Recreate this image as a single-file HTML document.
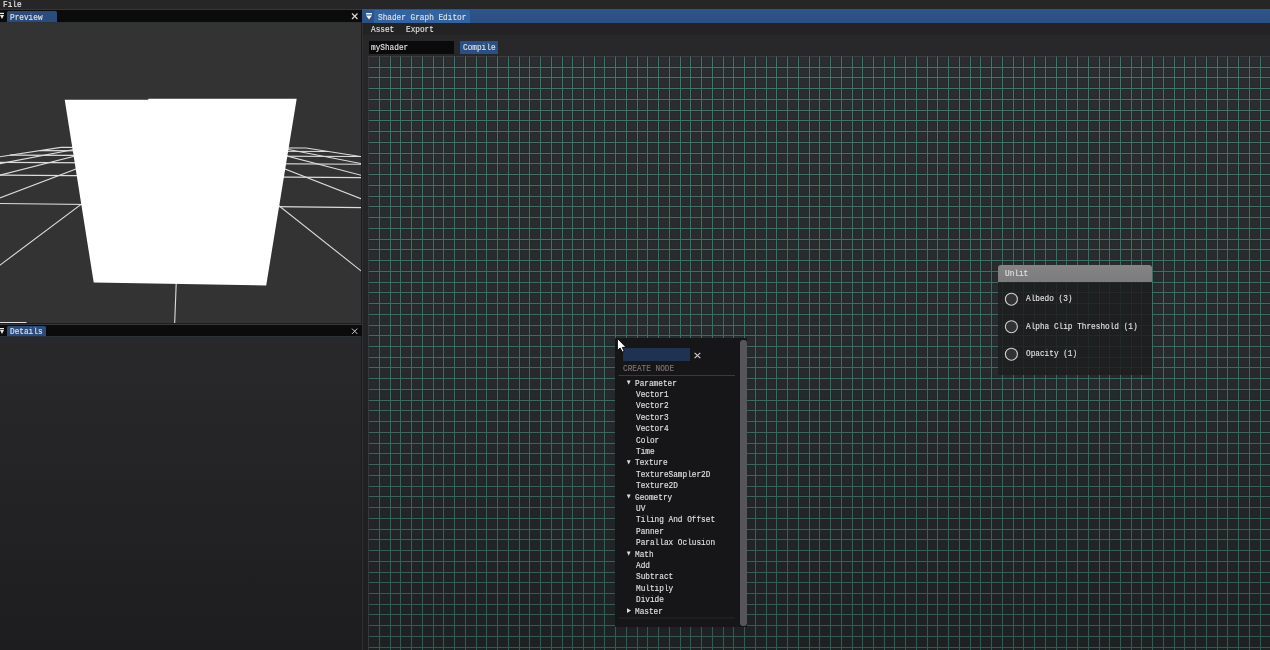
<!DOCTYPE html>
<html><head><meta charset="utf-8">
<style>
*{margin:0;padding:0;box-sizing:border-box}
html,body{width:1270px;height:650px;overflow:hidden;background:#1d1d1f}
body{position:relative;font-family:"Liberation Mono",monospace;font-size:7.75px;letter-spacing:0;color:#e2e2e2;line-height:9px}
.a{position:absolute}
.t{position:absolute;white-space:pre;transform:translateY(-0.3px) scaleY(1.1);transform-origin:0 0;will-change:transform;-webkit-text-stroke:0.12px currentColor}
svg{position:absolute;left:0;top:0}
</style></head><body>
<!-- main menu bar -->
<div class="a" style="left:0;top:0;width:1270px;height:9.5px;background:#262626"></div>
<div class="t" style="left:3px;top:0.5px;color:#eee">File</div>

<!-- Preview window -->
<div class="a" style="left:0;top:8.8px;width:362px;height:1.2px;background:#36363a"></div>
<div class="a" style="left:0;top:10px;width:362px;height:11.8px;background:#0b0b0b"></div>
<div class="a" style="left:7px;top:10.5px;width:49.5px;height:11.5px;background:#2a4c7c;border-radius:1.5px 1.5px 0 0"></div>
<div class="t" style="left:10px;top:13.8px">Preview</div>
<svg width="1270" height="650">
 <g fill="#e8e8e8"><rect x="0" y="12.8" width="4" height="1.3"/><polygon points="0,15 4,15 2,19"/></g>
 <g stroke="#d4d4d4" stroke-width="1.3"><line x1="352" y1="13.5" x2="357.5" y2="19"/><line x1="357.5" y1="13.5" x2="352" y2="19"/></g>
</svg>
<div class="a" style="left:0;top:21.8px;width:361.2px;height:301.5px;background:#333333;border-top:1.4px solid #2d3235"></div>
<svg width="1270" height="650">
 <defs><clipPath id="pv"><rect x="0" y="22" width="361.2" height="301.5"/></clipPath></defs>
 <g clip-path="url(#pv)"><g stroke="#dcdcdc" stroke-width="1.1" fill="none"><line x1="0.00" y1="322.60" x2="26.50" y2="322.60"/><line x1="-284.98" y1="200.36" x2="715.60" y2="211.52"/><line x1="-115.20" y1="174.34" x2="503.37" y2="178.62"/><line x1="-35.96" y1="162.20" x2="411.92" y2="164.44"/><line x1="9.92" y1="155.17" x2="360.99" y2="156.55"/><line x1="39.85" y1="150.58" x2="328.53" y2="151.52"/><line x1="60.91" y1="147.36" x2="306.04" y2="148.03"/><line x1="60.91" y1="147.36" x2="-3545.51" y2="700.00"/><line x1="84.64" y1="147.42" x2="-2804.30" y2="700.00"/><line x1="108.55" y1="147.49" x2="-2063.09" y2="700.00"/><line x1="132.63" y1="147.55" x2="-1321.89" y2="700.00"/><line x1="156.87" y1="147.62" x2="-580.68" y2="700.00"/><line x1="181.29" y1="147.69" x2="160.53" y2="700.00"/><line x1="205.88" y1="147.75" x2="901.74" y2="700.00"/><line x1="230.65" y1="147.82" x2="1642.94" y2="700.00"/><line x1="255.60" y1="147.89" x2="2384.15" y2="700.00"/><line x1="280.73" y1="147.96" x2="3125.36" y2="700.00"/><line x1="306.04" y1="148.03" x2="3866.56" y2="700.00"/></g></g>
 <polygon clip-path="url(#pv)" points="64.7,99.7 148.3,99.7 148.3,98.7 296.7,98.7 266.2,285.4 93.7,282.6" fill="#ffffff"/>
</svg>
<div class="a" style="left:361.2px;top:22px;width:1px;height:628px;background:#1c1c1c"></div>
<div class="a" style="left:362.2px;top:22px;width:1.2px;height:628px;background:#303032"></div>

<!-- Details window -->
<div class="a" style="left:0;top:323.3px;width:362px;height:0.8px;background:#1e1e1e"></div>
<div class="a" style="left:0;top:324.1px;width:362px;height:1px;background:#38383c"></div>
<div class="a" style="left:0;top:325.1px;width:362px;height:11.1px;background:#0b0b0b"></div>
<div class="a" style="left:7px;top:326px;width:38.7px;height:11px;background:#2a4c7c;border-radius:1.5px 1.5px 0 0"></div>
<div class="t" style="left:9.8px;top:328.3px">Details</div>
<svg width="1270" height="650">
 <g fill="#e8e8e8"><rect x="0" y="328" width="4" height="1.3"/><polygon points="0,330 4,330 2,334"/></g>
 <g stroke="#cccccc" stroke-width="1"><line x1="352" y1="328.6" x2="357.3" y2="333.9"/><line x1="357.3" y1="328.6" x2="352" y2="333.9"/></g>
</svg>
<div class="a" style="left:0;top:336.2px;width:361.2px;height:313.8px;background:linear-gradient(#29292c,#1d1d1f);border-top:1.4px solid #2a3438"></div>

<!-- Shader graph editor window -->
<div class="a" style="left:362.2px;top:9px;width:907.8px;height:13.7px;background:linear-gradient(#2e5589,#2a4f84)"></div>
<div class="a" style="left:374px;top:10px;width:95.5px;height:12.7px;background:#3264a4;border-radius:1.5px 1.5px 0 0"></div>
<div class="t" style="left:377.5px;top:13.5px">Shader Graph Editor</div>
<svg width="1270" height="650">
 <g fill="#f0f0f0"><rect x="366" y="13" width="6" height="1.5"/><polygon points="366,15.5 372,15.5 369,19.5"/></g>
</svg>
<div class="a" style="left:363.4px;top:22.7px;width:906.6px;height:627.3px;background:linear-gradient(#28282b,#1e1e20)"></div>
<div class="a" style="left:363.4px;top:22.7px;width:906.6px;height:12px;background:#232323"></div>
<div class="t" style="left:371.3px;top:26px">Asset</div>
<div class="t" style="left:405.8px;top:26px">Export</div>
<div class="a" style="left:368.5px;top:41px;width:85.5px;height:12.7px;background:#0a0a0a"></div>
<div class="t" style="left:371px;top:44px">myShader</div>
<div class="a" style="left:460px;top:41px;width:38px;height:12.7px;background:#2a4f84"></div>
<div class="t" style="left:463px;top:44px">Compile</div>

<!-- canvas -->
<div class="a" style="left:368.3px;top:56px;width:901.7px;height:594px;background:linear-gradient(#2c2d31 0%,#292a2e 50%,#1f2022 100%);border-top:1px solid #3e3e40;border-left:1px solid #38383a"></div>
<svg width="1270" height="650"><defs><linearGradient id="gl" gradientUnits="userSpaceOnUse" x1="0" y1="56" x2="0" y2="650"><stop offset="0" stop-color="#43736a"/><stop offset="0.5" stop-color="#3e6c64"/><stop offset="1" stop-color="#335a50"/></linearGradient></defs>
<path stroke="#0c2a22" stroke-opacity="0.3" stroke-width="3" d="M379.5 56.5V650M390.5 56.5V650M400.5 56.5V650M411.5 56.5V650M422.5 56.5V650M433.5 56.5V650M443.5 56.5V650M454.5 56.5V650M465.5 56.5V650M476.5 56.5V650M486.5 56.5V650M497.5 56.5V650M508.5 56.5V650M519.5 56.5V650M529.5 56.5V650M540.5 56.5V650M551.5 56.5V650M562.5 56.5V650M572.5 56.5V650M583.5 56.5V650M594.5 56.5V650M604.5 56.5V650M615.5 56.5V650M626.5 56.5V650M637.5 56.5V650M647.5 56.5V650M658.5 56.5V650M669.5 56.5V650M680.5 56.5V650M690.5 56.5V650M701.5 56.5V650M712.5 56.5V650M723.5 56.5V650M733.5 56.5V650M744.5 56.5V650M755.5 56.5V650M766.5 56.5V650M776.5 56.5V650M787.5 56.5V650M798.5 56.5V650M809.5 56.5V650M819.5 56.5V650M830.5 56.5V650M841.5 56.5V650M852.5 56.5V650M862.5 56.5V650M873.5 56.5V650M884.5 56.5V650M894.5 56.5V650M905.5 56.5V650M916.5 56.5V650M927.5 56.5V650M937.5 56.5V650M948.5 56.5V650M959.5 56.5V650M970.5 56.5V650M980.5 56.5V650M991.5 56.5V650M1002.5 56.5V650M1013.5 56.5V650M1023.5 56.5V650M1034.5 56.5V650M1045.5 56.5V650M1056.5 56.5V650M1066.5 56.5V650M1077.5 56.5V650M1088.5 56.5V650M1099.5 56.5V650M1109.5 56.5V650M1120.5 56.5V650M1131.5 56.5V650M1141.5 56.5V650M1152.5 56.5V650M1163.5 56.5V650M1174.5 56.5V650M1184.5 56.5V650M1195.5 56.5V650M1206.5 56.5V650M1217.5 56.5V650M1227.5 56.5V650M1238.5 56.5V650M1249.5 56.5V650M1260.5 56.5V650M368.7 67.5H1270M368.7 77.5H1270M368.7 88.5H1270M368.7 99.5H1270M368.7 110.5H1270M368.7 120.5H1270M368.7 131.5H1270M368.7 142.5H1270M368.7 153.5H1270M368.7 163.5H1270M368.7 174.5H1270M368.7 185.5H1270M368.7 196.5H1270M368.7 206.5H1270M368.7 217.5H1270M368.7 228.5H1270M368.7 239.5H1270M368.7 249.5H1270M368.7 260.5H1270M368.7 271.5H1270M368.7 282.5H1270M368.7 292.5H1270M368.7 303.5H1270M368.7 314.5H1270M368.7 325.5H1270M368.7 335.5H1270M368.7 346.5H1270M368.7 357.5H1270M368.7 367.5H1270M368.7 378.5H1270M368.7 389.5H1270M368.7 400.5H1270M368.7 410.5H1270M368.7 421.5H1270M368.7 432.5H1270M368.7 443.5H1270M368.7 453.5H1270M368.7 464.5H1270M368.7 475.5H1270M368.7 486.5H1270M368.7 496.5H1270M368.7 507.5H1270M368.7 518.5H1270M368.7 529.5H1270M368.7 539.5H1270M368.7 550.5H1270M368.7 561.5H1270M368.7 572.5H1270M368.7 582.5H1270M368.7 593.5H1270M368.7 604.5H1270M368.7 614.5H1270M368.7 625.5H1270M368.7 636.5H1270M368.7 647.5H1270"/><path stroke="url(#gl)" stroke-width="1" d="M379.5 56.5V650M390.5 56.5V650M400.5 56.5V650M411.5 56.5V650M422.5 56.5V650M433.5 56.5V650M443.5 56.5V650M454.5 56.5V650M465.5 56.5V650M476.5 56.5V650M486.5 56.5V650M497.5 56.5V650M508.5 56.5V650M519.5 56.5V650M529.5 56.5V650M540.5 56.5V650M551.5 56.5V650M562.5 56.5V650M572.5 56.5V650M583.5 56.5V650M594.5 56.5V650M604.5 56.5V650M615.5 56.5V650M626.5 56.5V650M637.5 56.5V650M647.5 56.5V650M658.5 56.5V650M669.5 56.5V650M680.5 56.5V650M690.5 56.5V650M701.5 56.5V650M712.5 56.5V650M723.5 56.5V650M733.5 56.5V650M744.5 56.5V650M755.5 56.5V650M766.5 56.5V650M776.5 56.5V650M787.5 56.5V650M798.5 56.5V650M809.5 56.5V650M819.5 56.5V650M830.5 56.5V650M841.5 56.5V650M852.5 56.5V650M862.5 56.5V650M873.5 56.5V650M884.5 56.5V650M894.5 56.5V650M905.5 56.5V650M916.5 56.5V650M927.5 56.5V650M937.5 56.5V650M948.5 56.5V650M959.5 56.5V650M970.5 56.5V650M980.5 56.5V650M991.5 56.5V650M1002.5 56.5V650M1013.5 56.5V650M1023.5 56.5V650M1034.5 56.5V650M1045.5 56.5V650M1056.5 56.5V650M1066.5 56.5V650M1077.5 56.5V650M1088.5 56.5V650M1099.5 56.5V650M1109.5 56.5V650M1120.5 56.5V650M1131.5 56.5V650M1141.5 56.5V650M1152.5 56.5V650M1163.5 56.5V650M1174.5 56.5V650M1184.5 56.5V650M1195.5 56.5V650M1206.5 56.5V650M1217.5 56.5V650M1227.5 56.5V650M1238.5 56.5V650M1249.5 56.5V650M1260.5 56.5V650M368.7 67.5H1270M368.7 77.5H1270M368.7 88.5H1270M368.7 99.5H1270M368.7 110.5H1270M368.7 120.5H1270M368.7 131.5H1270M368.7 142.5H1270M368.7 153.5H1270M368.7 163.5H1270M368.7 174.5H1270M368.7 185.5H1270M368.7 196.5H1270M368.7 206.5H1270M368.7 217.5H1270M368.7 228.5H1270M368.7 239.5H1270M368.7 249.5H1270M368.7 260.5H1270M368.7 271.5H1270M368.7 282.5H1270M368.7 292.5H1270M368.7 303.5H1270M368.7 314.5H1270M368.7 325.5H1270M368.7 335.5H1270M368.7 346.5H1270M368.7 357.5H1270M368.7 367.5H1270M368.7 378.5H1270M368.7 389.5H1270M368.7 400.5H1270M368.7 410.5H1270M368.7 421.5H1270M368.7 432.5H1270M368.7 443.5H1270M368.7 453.5H1270M368.7 464.5H1270M368.7 475.5H1270M368.7 486.5H1270M368.7 496.5H1270M368.7 507.5H1270M368.7 518.5H1270M368.7 529.5H1270M368.7 539.5H1270M368.7 550.5H1270M368.7 561.5H1270M368.7 572.5H1270M368.7 582.5H1270M368.7 593.5H1270M368.7 604.5H1270M368.7 614.5H1270M368.7 625.5H1270M368.7 636.5H1270M368.7 647.5H1270"/></svg>

<!-- Unlit node -->
<div class="a" style="left:998px;top:265px;width:154.4px;height:110.1px;background:rgba(28,29,31,0.85);border-radius:3px 3px 0 0"></div>
<div class="a" style="left:998px;top:265px;width:154.4px;height:16.7px;background:linear-gradient(#848484,#7c7c7c);border-radius:3px 3px 0 0"></div>
<div class="t" style="left:1005px;top:270px">Unlit</div>
<svg width="1270" height="650"><g stroke="#d0d0d0" stroke-width="1.1" fill="#323232">
<circle cx="1011.4" cy="299.2" r="6"/><circle cx="1011.4" cy="326.7" r="6"/><circle cx="1011.4" cy="354.2" r="6"/></g></svg>
<div class="t" style="left:1025.5px;top:295.3px">Albedo (3)</div>
<div class="t" style="left:1025.5px;top:322.8px">Alpha Clip Threshold (1)</div>
<div class="t" style="left:1025.5px;top:350.3px">Opacity (1)</div>

<!-- popup -->
<div class="a" style="left:615px;top:338.3px;width:132.3px;height:289px;background:#161618;border-radius:1px"></div>
<div class="a" style="left:740.2px;top:340px;width:6.5px;height:286px;background:#56565a;border-radius:3px"></div>
<div class="a" style="left:622.5px;top:348.3px;width:67px;height:12.7px;background:#1f3252"></div>
<svg width="1270" height="650"><g stroke="#d0d0d0" stroke-width="1.1"><line x1="694.6" y1="352.8" x2="700.3" y2="358.2"/><line x1="700.3" y1="352.8" x2="694.6" y2="358.2"/></g>
<line x1="618.5" y1="375.5" x2="735" y2="375.5" stroke="#3a3a3c" stroke-width="1"/>
<line x1="618.5" y1="618" x2="735" y2="618" stroke="#262628" stroke-width="1"/>
<g fill="#dddddd"><polygon points="626.8,380.5 630.6,380.5 628.7,384.7"/><polygon points="626.8,460.3 630.6,460.3 628.7,464.5"/><polygon points="626.8,494.5 630.6,494.5 628.7,498.7"/><polygon points="626.8,551.5 630.6,551.5 628.7,555.7"/><polygon points="627,608.3 631,610.6 627,612.9"/></g>
</svg>
<div class="t" style="left:622.7px;top:364.5px;color:#7e767a">CREATE NODE</div>
<div class="t" style="left:635px;top:379.5px">Parameter</div><div class="t" style="left:636px;top:390.9px">Vector1</div><div class="t" style="left:636px;top:402.3px">Vector2</div><div class="t" style="left:636px;top:413.7px">Vector3</div><div class="t" style="left:636px;top:425.1px">Vector4</div><div class="t" style="left:636px;top:436.5px">Color</div><div class="t" style="left:636px;top:447.9px">Time</div><div class="t" style="left:635px;top:459.3px">Texture</div><div class="t" style="left:636px;top:470.7px">TextureSampler2D</div><div class="t" style="left:636px;top:482.1px">Texture2D</div><div class="t" style="left:635px;top:493.5px">Geometry</div><div class="t" style="left:636px;top:504.9px">UV</div><div class="t" style="left:636px;top:516.3px">Tiling And Offset</div><div class="t" style="left:636px;top:527.7px">Panner</div><div class="t" style="left:636px;top:539.1px">Parallax Oclusion</div><div class="t" style="left:635px;top:550.5px">Math</div><div class="t" style="left:636px;top:561.9px">Add</div><div class="t" style="left:636px;top:573.3px">Subtract</div><div class="t" style="left:636px;top:584.7px">Multiply</div><div class="t" style="left:636px;top:596.1px">Divide</div><div class="t" style="left:635px;top:607.5px">Master</div>

<!-- cursor -->
<svg width="1270" height="650"><polygon points="617.4,338.4 617.4,350.4 620.1,348 622.3,352.1 624.3,351.3 622.2,347.4 626,347.3" fill="#fff" stroke="#050505" stroke-width="0.9" stroke-linejoin="miter"/></svg>
</body></html>
